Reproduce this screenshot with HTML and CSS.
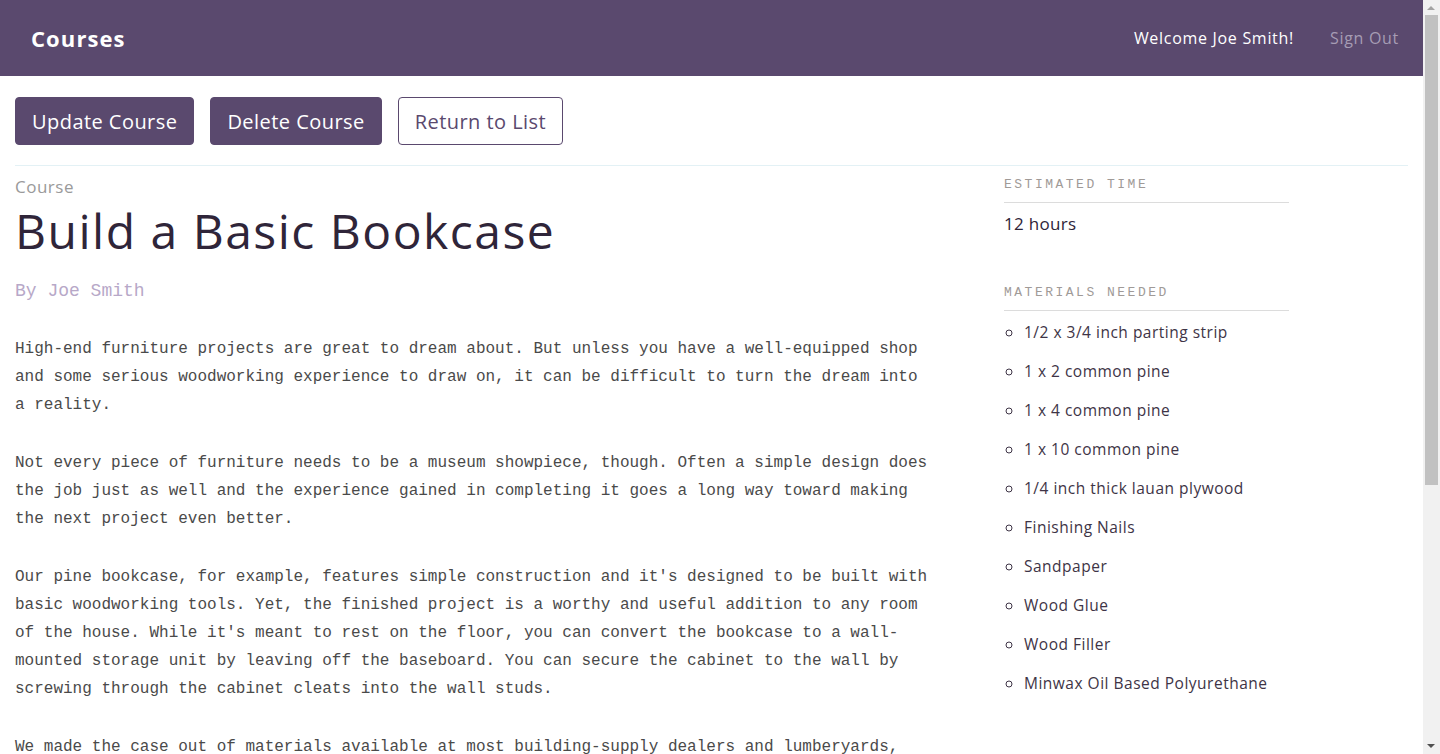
FILE: index.html
```html
<!DOCTYPE html>
<html lang="en">
<head>
<meta charset="utf-8">
<title>Courses</title>
<link rel="stylesheet" href="styles.css">
</head>
<body>
<header class="header">
  <h1 class="logo">Courses</h1>
  <nav class="user-nav">
    <span class="welcome">Welcome Joe Smith!</span>
    <a class="signout" href="#">Sign Out</a>
  </nav>
</header>
<div class="actions-bar">
  <div class="actions">
    <a class="button" href="#">Update Course</a>
    <a class="button" href="#">Delete Course</a>
    <a class="button button-secondary" href="#">Return to List</a>
  </div>
</div>
<div class="details">
  <div class="main">
    <h4 class="course-label">Course</h4>
    <h3 class="course-title">Build a Basic Bookcase</h3>
    <p class="author">By Joe Smith</p>
    <div class="description">
      <p>High-end furniture projects are great to dream about. But unless you have a well-equipped shop and some serious woodworking experience to draw on, it can be difficult to turn the dream into a reality.</p>
      <p>Not every piece of furniture needs to be a museum showpiece, though. Often a simple design does the job just as well and the experience gained in completing it goes a long way toward making the next project even better.</p>
      <p>Our pine bookcase, for example, features simple construction and it's designed to be built with basic woodworking tools. Yet, the finished project is a worthy and useful addition to any room of the house. While it's meant to rest on the floor, you can convert the bookcase to a wall-mounted storage unit by leaving off the baseboard. You can secure the cabinet to the wall by screwing through the cabinet cleats into the wall studs.</p>
      <p>We made the case out of materials available at most building-supply dealers and lumberyards, including 1/2 x 3/4-in. parting strip, 1 x 2, 1 x 4 and 1 x 10 common pine and 1/4-in.-thick lauan plywood. Assembly is quick and easy with glue and nails, and when you're done with construction you have the option of a painted or clear finish.</p>
      <p>As for basic tools, you'll need a portable circular saw, hammer, block plane, combination square, tape measure, metal rule, two clamps, nail set and putty knife. Other supplies include glue, nails, sandpaper, wood filler and varnish or paint and shellac.</p>
    </div>
  </div>
  <aside class="sidebar">
    <div class="stat">
      <h4 class="stat-heading">Estimated Time</h4>
      <p class="stat-value">12 hours</p>
    </div>
    <div class="stat">
      <h4 class="stat-heading">Materials Needed</h4>
      <ul class="materials">
        <li>1/2 x 3/4 inch parting strip</li>
        <li>1 x 2 common pine</li>
        <li>1 x 4 common pine</li>
        <li>1 x 10 common pine</li>
        <li>1/4 inch thick lauan plywood</li>
        <li>Finishing Nails</li>
        <li>Sandpaper</li>
        <li>Wood Glue</li>
        <li>Wood Filler</li>
        <li>Minwax Oil Based Polyurethane</li>
      </ul>
    </div>
  </aside>
</div>
<div class="scrollbar" aria-hidden="true">
  <span class="scroll-arrow scroll-up"></span>
  <span class="scroll-thumb"></span>
  <span class="scroll-arrow scroll-down"></span>
</div>
</body>
</html>
```

FILE: styles.css
```css
html, body {
  margin: 0;
  padding: 0;
}
body {
  font-family: "Open Sans", "Liberation Sans", sans-serif;
  color: #3e3446;
  background: #fff;
  margin-right: 17px;
  overflow-x: hidden;
}
.header {
  height: 76px;
  background: #5a496e;
  display: flex;
  align-items: center;
  justify-content: space-between;
  padding: 0 24px 0 31px;
}
.logo {
  margin: 0;
  font-size: 22px;
  font-weight: 700;
  letter-spacing: 1.1px;
  color: #fff;
}
.user-nav {
  display: flex;
  align-items: center;
  gap: 36px;
  font-size: 16px;
  letter-spacing: 0.7px;
}
.welcome {
  color: #fff;
}
.signout {
  color: #a69cb4;
  text-decoration: none;
}
.actions-bar {
  margin: 0 15px;
  padding: 21px 0 20px;
  border-bottom: 1px solid #e3f1f5;
}
.actions {
  display: flex;
  gap: 16px;
}
.button {
  display: inline-flex;
  align-items: center;
  height: 48px;
  box-sizing: border-box;
  padding: 0 16px;
  border-radius: 4px;
  background: #5a496e;
  color: #fff;
  font-size: 20px;
  letter-spacing: 0.45px;
  text-decoration: none;
  border: 1px solid #5a496e;
}
.button-secondary {
  background: #fff;
  color: #5a496e;
}
.details {
  margin: 0 15px;
  display: grid;
  grid-template-columns: 915px 1fr;
}
.course-label {
  margin: 11px 0 0;
  font-size: 17px;
  font-weight: 400;
  letter-spacing: 0.5px;
  color: #9a9a9a;
  line-height: 20px;
}
.course-title {
  margin: 6px 0 0;
  font-size: 48px;
  font-weight: 400;
  letter-spacing: 1.5px;
  color: #2f2539;
  line-height: 56px;
}
.author {
  margin: 20px 0 0;
  font-family: "Liberation Mono", monospace;
  font-size: 18px;
  color: #b7a8c8;
  line-height: 24px;
}
.description {
  margin-top: 32px;
  font-family: "Liberation Mono", monospace;
  font-size: 16px;
  line-height: 28px;
  color: #4a4a4a;
}
.description p {
  margin: 0 0 30px;
}
.sidebar {
  padding-left: 74px;
}
.stat {
  width: 285px;
}
.stat-heading {
  margin: 10px 0 0;
  padding-bottom: 8px;
  border-bottom: 1px solid #dcdcdc;
  font-family: "Liberation Mono", monospace;
  font-size: 13px;
  font-weight: 400;
  letter-spacing: 2.5px;
  text-transform: uppercase;
  color: #a09a97;
  line-height: 18px;
}
.stat-value {
  margin: 10px 0 0;
  font-size: 17px;
  letter-spacing: 0.3px;
  line-height: 22px;
  color: #2f2539;
  padding-bottom: 39px;
}
.materials {
  margin: 11px 0 0;
  padding-left: 20px;
  list-style: circle;
  font-size: 15.5px;
  letter-spacing: 0.5px;
  line-height: 20px;
  color: #3e3446;
}
.materials li {
  margin-bottom: 19px;
}
.scrollbar {
  position: fixed;
  top: 0;
  right: 0;
  bottom: 0;
  width: 17px;
  background: #f1f1f1;
}
.scroll-thumb {
  position: absolute;
  left: 2px;
  right: 2px;
  top: 15px;
  height: 470px;
  background: #c1c1c1;
}
.scroll-arrow {
  position: absolute;
  left: 4px;
  width: 0;
  height: 0;
  border-left: 4px solid transparent;
  border-right: 4px solid transparent;
}
.scroll-up {
  top: 6px;
  border-bottom: 4px solid #a3a3a3;
}
.scroll-down {
  bottom: 6px;
  border-top: 4px solid #505050;
}
```
